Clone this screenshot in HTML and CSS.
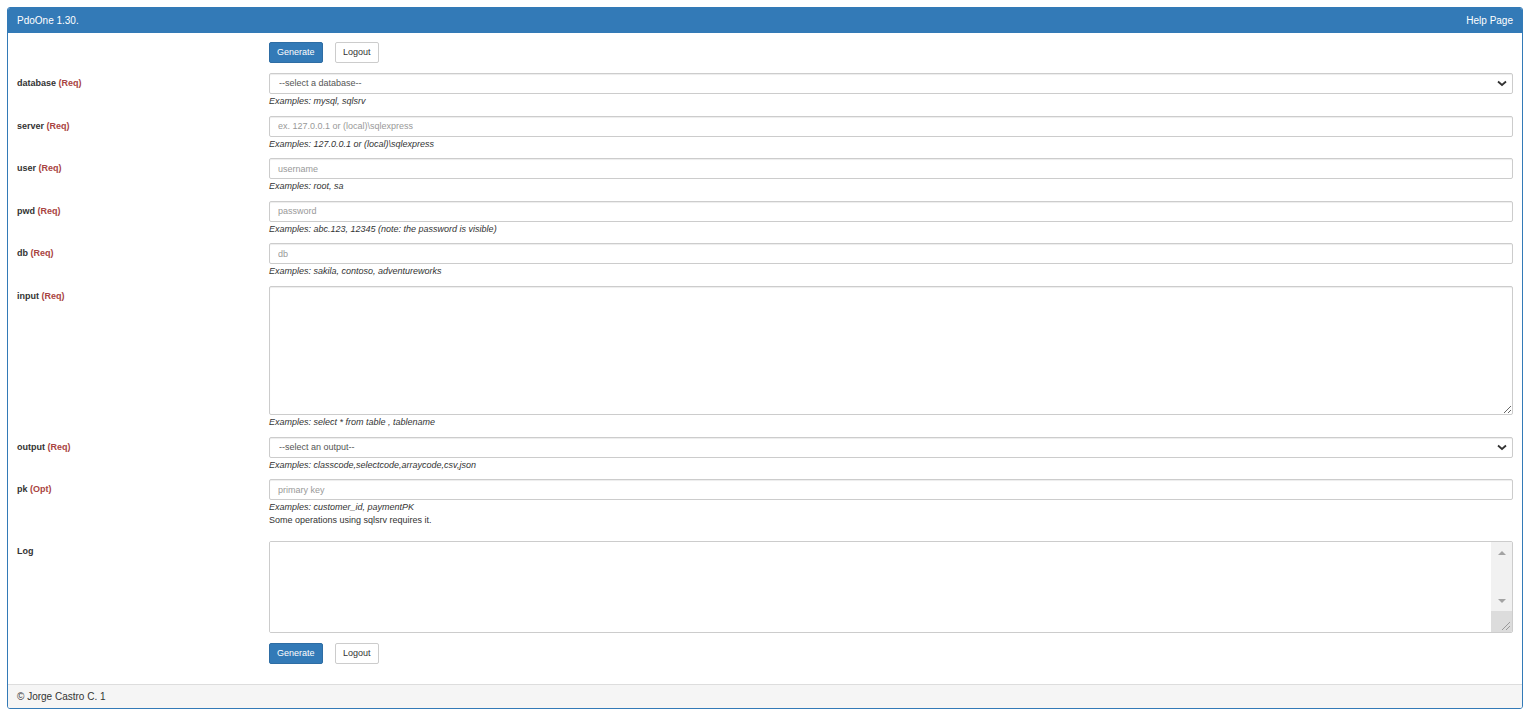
FILE: index.html
```html
<!DOCTYPE html>
<html>
<head>
  <meta name="viewport" content="width=device-width, initial-scale=1">
  <link rel="stylesheet" href="styles.css">
</head>
<body>

<div class="panel">
  <div class="panel-heading">
    <span>PdoOne 1.30.</span>
    <a class="help-link" href="#">Help Page</a>
  </div>

  <form class="panel-body">
    <div class="form-group">
      <div class="control-label"></div>
      <div class="controls">
        <button type="button" class="btn btn-primary">Generate</button>
        <button type="button" class="btn btn-default">Logout</button>
      </div>
    </div>

    <div class="form-group">
      <label class="control-label">database <span class="req">(Req)</span></label>
      <div class="controls">
        <div class="select-wrap">
          <select class="form-control">
            <option>--select a database--</option>
            <option>mysql</option>
            <option>sqlsrv</option>
          </select>
          <svg class="chevron" width="10" height="7" viewBox="0 0 10 7"><polyline points="1,1.5 5,5 9,1.5" fill="none" stroke="#333" stroke-width="1.8"/></svg>
        </div>
        <div class="help-block"><em>Examples: mysql, sqlsrv</em></div>
      </div>
    </div>

    <div class="form-group">
      <label class="control-label">server <span class="req">(Req)</span></label>
      <div class="controls">
        <input type="text" class="form-control" placeholder="ex. 127.0.0.1 or (local)\sqlexpress">
        <div class="help-block"><em>Examples: 127.0.0.1 or (local)\sqlexpress</em></div>
      </div>
    </div>

    <div class="form-group">
      <label class="control-label">user <span class="req">(Req)</span></label>
      <div class="controls">
        <input type="text" class="form-control" placeholder="username">
        <div class="help-block"><em>Examples: root, sa</em></div>
      </div>
    </div>

    <div class="form-group">
      <label class="control-label">pwd <span class="req">(Req)</span></label>
      <div class="controls">
        <input type="text" class="form-control" placeholder="password">
        <div class="help-block"><em>Examples: abc.123, 12345 (note: the password is visible)</em></div>
      </div>
    </div>

    <div class="form-group">
      <label class="control-label">db <span class="req">(Req)</span></label>
      <div class="controls">
        <input type="text" class="form-control" placeholder="db">
        <div class="help-block"><em>Examples: sakila, contoso, adventureworks</em></div>
      </div>
    </div>

    <div class="form-group">
      <label class="control-label">input <span class="req">(Req)</span></label>
      <div class="controls">
        <textarea class="form-control input-area"></textarea>
        <div class="help-block"><em>Examples: select * from table , tablename</em></div>
      </div>
    </div>

    <div class="form-group">
      <label class="control-label">output <span class="req">(Req)</span></label>
      <div class="controls">
        <div class="select-wrap">
          <select class="form-control">
            <option>--select an output--</option>
            <option>classcode</option>
            <option>selectcode</option>
            <option>arraycode</option>
            <option>csv</option>
            <option>json</option>
          </select>
          <svg class="chevron" width="10" height="7" viewBox="0 0 10 7"><polyline points="1,1.5 5,5 9,1.5" fill="none" stroke="#333" stroke-width="1.8"/></svg>
        </div>
        <div class="help-block"><em>Examples: classcode,selectcode,arraycode,csv,json</em></div>
      </div>
    </div>

    <div class="form-group group-pk">
      <label class="control-label">pk <span class="req">(Opt)</span></label>
      <div class="controls">
        <input type="text" class="form-control" placeholder="primary key">
        <div class="help-block"><em>Examples: customer_id, paymentPK</em><br>Some operations using sqlsrv requires it.</div>
      </div>
    </div>

    <div class="form-group group-log">
      <label class="control-label">Log</label>
      <div class="controls">
        <div class="log-box">
          <textarea class="log-area" readonly></textarea>
          <div class="fake-scroll">
            <div class="scroll-btn"><span class="tri-up"></span></div>
            <div class="scroll-track"></div>
            <div class="scroll-btn"><span class="tri-down"></span></div>
            <div class="scroll-corner">
              <svg width="10" height="10" viewBox="0 0 10 10"><line x1="2" y1="10" x2="10" y2="2" stroke="#888" stroke-width="0.8"/><line x1="6" y1="10" x2="10" y2="6" stroke="#888" stroke-width="0.8"/></svg>
            </div>
          </div>
        </div>
      </div>
    </div>

    <div class="form-group group-last">
      <div class="control-label"></div>
      <div class="controls">
        <button type="button" class="btn btn-primary">Generate</button>
        <button type="button" class="btn btn-default">Logout</button>
      </div>
    </div>
  </form>

  <div class="panel-footer">&copy; Jorge Castro C. 1</div>
</div>

</body>
</html>
```

FILE: styles.css
```css
body {
  font-family: "Liberation Sans", Arial, Helvetica, sans-serif;
  font-size: 9px;
  line-height: 1.4;
  color: #333;
  margin: 7px 7px 12px 7px;
  background-color: #fff;
}

.panel {
  border: 1px solid #337ab7;
  border-radius: 3px;
  overflow: hidden;
}

.panel-heading {
  display: flex;
  justify-content: space-between;
  background-color: #337ab7;
  color: #fff;
  font-size: 10px;
  line-height: 13px;
  padding: 6px 9px 6px 9px;
}

.help-link {
  color: #fff;
  text-decoration: none;
}

.panel-body {
  padding: 9px 9px 10px 9px;
  margin: 0;
}

.form-group {
  display: grid;
  grid-template-columns: 252px 1fr;
  margin-bottom: 8px;
}

.control-label {
  font-weight: bold;
  padding-top: 4px;
  line-height: 12.6px;
}

.req {
  color: #a94442;
}

.controls {
  min-width: 0;
}

.btn {
  font-family: inherit;
  font-size: 9px;
  line-height: 13px;
  padding: 3px 7px;
  border: 1px solid transparent;
  border-radius: 2px;
  margin-right: 10px;
  cursor: pointer;
}

.btn-primary {
  background-color: #337ab7;
  border-color: #2e6da4;
  color: #fff;
}

.btn-default {
  background-color: #fff;
  border-color: #ccc;
  color: #333;
}

.form-group:first-child {
  margin-bottom: 10px;
}

.form-control {
  display: block;
  box-sizing: border-box;
  width: 100%;
  height: 21px;
  font-family: inherit;
  font-size: 9px;
  line-height: 13px;
  color: #555;
  padding: 3px 8px;
  border: 1px solid #ccc;
  border-radius: 2px;
  background-color: #fff;
  box-shadow: inset 0 1px 1px rgba(0, 0, 0, 0.075);
  margin: 0;
}

.form-control::placeholder {
  color: #999;
}

.select-wrap {
  position: relative;
}

select.form-control {
  appearance: none;
  -webkit-appearance: none;
  padding-left: 9px;
  padding-top: 2px;
  padding-bottom: 2px;
}

.chevron {
  position: absolute;
  right: 6px;
  top: 7px;
  pointer-events: none;
}

.input-area {
  height: 129px;
  resize: vertical;
}

.help-block {
  margin-top: 1px;
  line-height: 12.6px;
  color: #333;
}

.group-pk {
  margin-bottom: 15px;
}

.group-log {
  margin-bottom: 10px;
}

.group-last {
  margin-bottom: 0;
  padding-bottom: 10px;
}

.log-box {
  display: flex;
  height: 92px;
  box-sizing: border-box;
  border: 1px solid #ccc;
  border-radius: 2px;
  overflow: hidden;
}

.log-area {
  flex: 1;
  border: none;
  resize: none;
  outline: none;
  font-family: inherit;
  font-size: 9px;
  padding: 3px 8px;
}

.fake-scroll {
  width: 21px;
  display: flex;
  flex-direction: column;
  background-color: #f1f1f1;
}

.scroll-btn {
  height: 21px;
  display: flex;
  align-items: center;
  justify-content: center;
}

.scroll-track {
  flex: 1;
}

.tri-up {
  width: 0;
  height: 0;
  border-left: 4px solid transparent;
  border-right: 4px solid transparent;
  border-bottom: 4px solid #a3a3a3;
}

.tri-down {
  width: 0;
  height: 0;
  border-left: 4px solid transparent;
  border-right: 4px solid transparent;
  border-top: 4px solid #a3a3a3;
}

.scroll-corner {
  height: 21px;
  background-color: #dcdcdc;
  display: flex;
  align-items: flex-end;
  justify-content: flex-end;
  padding: 0 2px 2px 0;
  box-sizing: border-box;
}

.panel-footer {
  background-color: #f5f5f5;
  border-top: 1px solid #ddd;
  padding: 5px 9px;
  font-size: 10px;
  line-height: 13px;
}
```
